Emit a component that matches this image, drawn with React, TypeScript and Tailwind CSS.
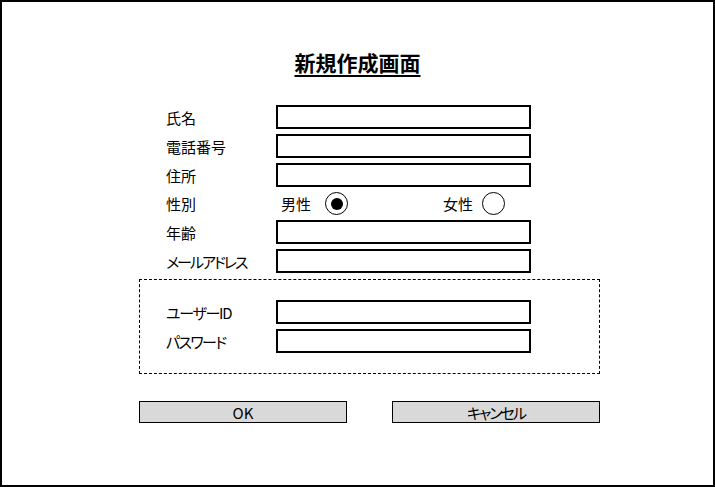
export default function App() {
  const topRows = ["氏名", "電話番号", "住所"]

  const Field = () => <div className="w-[255px] h-[24px] border-2 border-black bg-white" />

  const Row = ({ label, tight }: { label: string; tight?: string }) => (
    <div className="flex items-center h-[24px]">
      <span className="w-[110px] leading-none">
        <span className={tight}>{label}</span>
      </span>
      <Field />
    </div>
  )

  return (
    <div
      className="w-[715px] h-[487px] border-2 border-black bg-white text-black text-[15px] pt-[46px] [font-feature-settings:'palt']"
      style={{ fontFamily: '"Noto Sans CJK JP", "Noto Sans", sans-serif' }}
    >
      <h1 className="h-[28px] leading-[28px] text-center text-[21px] font-bold underline decoration-2 underline-offset-[4px]">
        新規作成画面
      </h1>

      <div className="ml-[137px] w-[461px] mt-[29px]">
        <div className="flex flex-col gap-[5px] pl-[27px]">
          {topRows.map((l) => (
            <Row key={l} label={l} />
          ))}
          <div className="flex items-center h-[23px]">
            <span className="w-[110px] leading-none">性別</span>
            <div className="flex items-center w-[167px] pl-[5px] gap-[14px]">
              <span className="leading-none">男性</span>
              <span className="w-[23px] h-[23px] rounded-full border-[1.5px] border-black flex items-center justify-center">
                <span className="w-[12px] h-[12px] rounded-full bg-black" />
              </span>
            </div>
            <div className="flex items-center gap-[9px]">
              <span className="leading-none">女性</span>
              <span className="w-[23px] h-[23px] rounded-full border-[1.5px] border-black" />
            </div>
          </div>
          <Row label="年齢" />
          <Row label="メールアドレス" tight="tracking-[-2px]" />
        </div>

        <div className="mt-[6px] border border-dashed border-black pl-[26px] py-[20px] flex flex-col gap-[5px]">
          <Row label="ユーザーID" tight="tracking-[-1.3px]" />
          <Row label="パスワード" tight="tracking-[-1.6px]" />
        </div>

        <div className="mt-[27px] flex justify-between">
          <button className="w-[208px] h-[22px] bg-[#d9d9d9] border border-black text-[15px] leading-none">
            OK
          </button>
          <button className="w-[208px] h-[22px] bg-[#d9d9d9] border border-black text-[15px] leading-none tracking-[-2px]">
            キャンセル
          </button>
        </div>
      </div>
    </div>
  )
}
